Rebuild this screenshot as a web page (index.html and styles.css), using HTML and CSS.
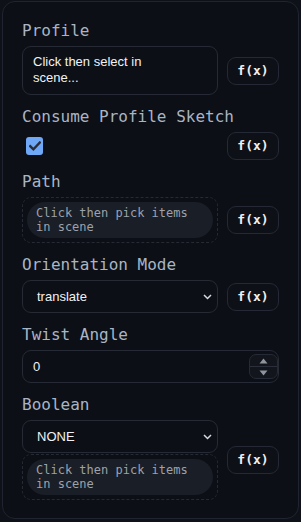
FILE: index.html
```html
<!DOCTYPE html>
<html lang="en">
<head>
<meta charset="utf-8">
<title>Sweep</title>
<link rel="stylesheet" href="styles.css">
</head>
<body>
<div class="panel">
  <div class="field">
    <div class="label">Profile</div>
    <div class="row">
      <div class="textbox">Click then select in scene...</div>
      <button class="fx">f(x)</button>
    </div>
  </div>
  <div class="field">
    <div class="label">Consume Profile Sketch</div>
    <div class="row">
      <div class="check-wrap">
        <span class="checkbox">
          <svg width="12" height="10" viewBox="0 0 12 10"><path d="M1.2 5.2 L4.4 8.3 L10.8 1.6" fill="none" stroke="#2b2e34" stroke-width="2.4" stroke-linecap="square"/></svg>
        </span>
      </div>
      <button class="fx">f(x)</button>
    </div>
  </div>
  <div class="field">
    <div class="label">Path</div>
    <div class="row">
      <div class="picker"><div class="pill">Click then pick items in scene</div></div>
      <button class="fx">f(x)</button>
    </div>
  </div>
  <div class="field">
    <div class="label">Orientation Mode</div>
    <div class="row">
      <div class="select"><span>translate</span>
        <svg class="chev" width="9" height="6" viewBox="0 0 9 6"><path d="M1 1 L4.5 4.5 L8 1" fill="none" stroke="#d6d9de" stroke-width="1.5"/></svg>
      </div>
      <button class="fx">f(x)</button>
    </div>
  </div>
  <div class="field">
    <div class="label">Twist Angle</div>
    <div class="number">
      <span class="num-val">0</span>
      <div class="spinner">
        <div class="spin-btn"><svg width="9" height="6" viewBox="0 0 9 6"><path d="M4.5 0.5 L8.5 5.5 L0.5 5.5 Z" fill="#8f959e"/></svg></div>
        <div class="spin-btn"><svg width="9" height="6" viewBox="0 0 9 6"><path d="M0.5 0.5 L8.5 0.5 L4.5 5.5 Z" fill="#8f959e"/></svg></div>
      </div>
    </div>
  </div>
  <div class="field">
    <div class="label">Boolean</div>
    <div class="row">
      <div class="stack">
        <div class="select"><span>NONE</span>
          <svg class="chev" width="9" height="6" viewBox="0 0 9 6"><path d="M1 1 L4.5 4.5 L8 1" fill="none" stroke="#d6d9de" stroke-width="1.5"/></svg>
        </div>
        <div class="picker"><div class="pill">Click then pick items in scene</div></div>
      </div>
      <button class="fx">f(x)</button>
    </div>
  </div>
</div>
</body>
</html>
```
FILE: styles.css
```css
* { box-sizing: border-box; }
html, body {
  margin: 0;
  background: #0e1117;
}
body {
  width: 301px;
  height: 522px;
  overflow: hidden;
  padding: 1px 0 0 2px;
}
.panel {
  width: 297px;
  border: 1px solid #1f2430;
  border-radius: 13px;
  background: #0c0f15;
  padding: 19px 19px 18px;
  display: flex;
  flex-direction: column;
  gap: 12px;
}
.field {
  display: flex;
  flex-direction: column;
  gap: 6px;
}
.label {
  font-family: "DejaVu Sans Mono", monospace;
  font-size: 16px;
  line-height: 19px;
  color: #a9b5c5;
  white-space: nowrap;
}
.row {
  display: grid;
  grid-template-columns: 196px 52px;
  column-gap: 9px;
  align-items: center;
}
.fx {
  height: 28px;
  width: 52px;
  padding: 0;
  border: 1px solid #242935;
  border-radius: 9px;
  background: #0d1016;
  color: #eef0f3;
  font-family: "DejaVu Sans Mono", monospace;
  font-weight: bold;
  font-size: 13px;
  line-height: 26px;
}
.textbox {
  height: 49px;
  border: 1px solid #252a35;
  border-radius: 9px;
  background: #0c0f15;
  padding: 7px 40px 7px 10px;
  font-family: "Liberation Sans", Arial, sans-serif;
  font-size: 13px;
  line-height: 16px;
  color: #f0f2f5;
}
.check-wrap {
  display: flex;
  align-items: center;
}
.checkbox {
  width: 17px;
  height: 18px;
  margin-left: 4px;
  border-radius: 3px;
  background: #6ea8f7;
  display: flex;
  align-items: center;
  justify-content: center;
}
.picker {
  height: 46px;
  border: 1px dashed #252a35;
  border-radius: 9px;
  padding: 4px;
}
.pill {
  height: 36px;
  border-radius: 18px;
  background: #1a1e27;
  padding: 4px 9px;
  font-family: "DejaVu Sans Mono", monospace;
  font-size: 12px;
  line-height: 14px;
  color: #9ca2ab;
}
.select {
  height: 33px;
  border: 1px solid #252a35;
  border-radius: 9px;
  background: #0c0f15;
  padding: 0 5px 0 14px;
  display: flex;
  align-items: center;
  justify-content: space-between;
  font-family: "Liberation Sans", Arial, sans-serif;
  font-size: 13px;
  color: #f0f2f5;
}
.stack {
  display: flex;
  flex-direction: column;
  gap: 1px;
}
.number {
  height: 33px;
  border: 1px solid #252a35;
  border-radius: 9px;
  background: #0c0f15;
  padding: 0 0 0 10px;
  display: flex;
  align-items: center;
  justify-content: space-between;
  font-family: "Liberation Sans", Arial, sans-serif;
  font-size: 13px;
  color: #f0f2f5;
}
.spinner {
  width: 29px;
  height: 25px;
  border: 1px solid #252a35;
  border-radius: 7px;
  background: #12151c;
  display: flex;
  flex-direction: column;
}
.spin-btn {
  flex: 1;
  display: flex;
  align-items: center;
  justify-content: center;
}
.spin-btn + .spin-btn {
  border-top: 1px solid #2a2f3a;
}
```
